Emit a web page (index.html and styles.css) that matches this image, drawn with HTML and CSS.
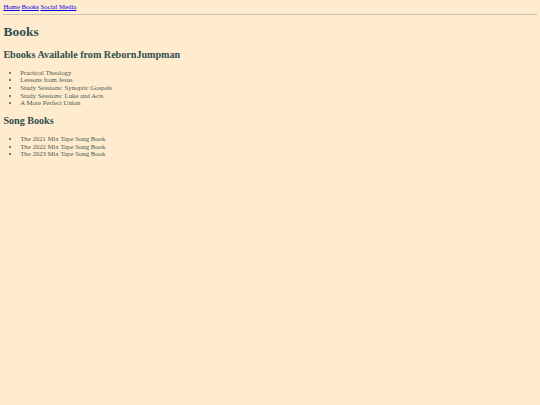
FILE: index.html
```html
<!DOCTYPE html>
<html>
<head>
<meta charset="utf-8">
<title>Books</title>
<link rel="stylesheet" href="styles.css">
</head>
<body>
<nav class="topnav"><a href="#">Home</a> <a href="#">Books</a> <a href="#">Social Media</a></nav>
<hr class="rule">
<main class="content">
<h1 class="title">Books</h1>
<h2 class="section">Ebooks Available from RebornJumpman</h2>
<ul class="list">
<li>Practical Theology</li>
<li>Lessons from Jesus</li>
<li>Study Sessions: Synoptic Gospels</li>
<li>Study Sessions: Luke and Acts</li>
<li>A More Perfect Union</li>
</ul>
<h2 class="section">Song Books</h2>
<ul class="list">
<li>The 2021 Mix Tape Song Book</li>
<li>The 2022 Mix Tape Song Book</li>
<li>The 2023 Mix Tape Song Book</li>
</ul>
</main>
</body>
</html>
```

FILE: styles.css
```css
html {
  background: #ffebcd;
  font-size: 6.75px;
}
body {
  margin: 3.375px;
  font-family: "Liberation Serif", "Times New Roman", serif;
  font-size: 6.75px;
  line-height: 7.6px;
  color: #2f4f4f;
}
.topnav a {
  color: #0000ee;
}
.rule {
  margin: 0.5em 0;
  border: 0;
  border-top: 1px solid #c9c0b2;
  height: 0;
}
.title {
  font-size: 2em;
  line-height: 15.5px;
  margin: 0.67em 0;
}
.section {
  font-size: 1.5em;
  line-height: 11.6px;
  margin: 0.83em 0;
}
.list {
  margin: 1em 0;
  padding-left: 2.5em;
}
.list li {
  color: #4a5a55;
}
```
